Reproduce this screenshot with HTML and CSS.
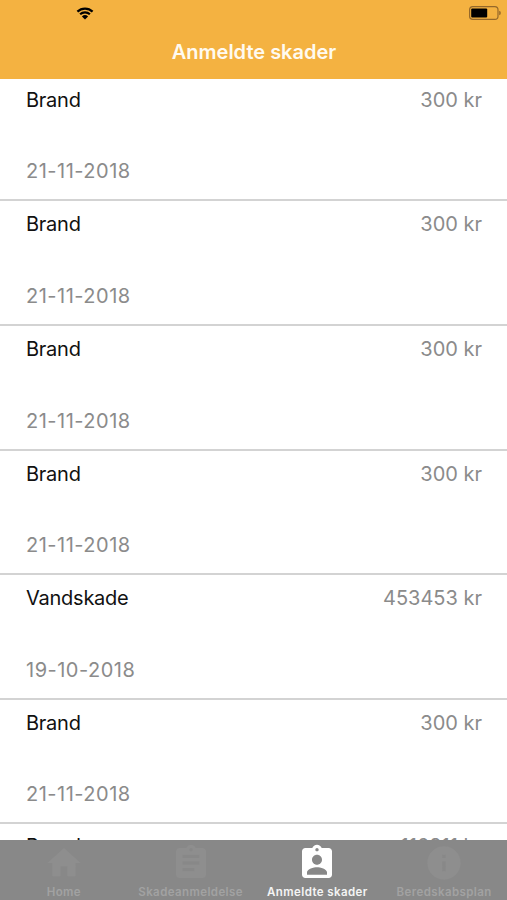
FILE: index.html
```html
<!DOCTYPE html>
<html lang="da">
<head>
    <meta charset="UTF-8">
    <meta name="viewport" content="width=device-width, initial-scale=1.0">
    <title>Anmeldte skader</title>
    <link rel="stylesheet" href="styles.css">
</head>
<body>
    <!-- Header with status bar -->
    <header class="header">
        <div class="status-bar">
            <svg class="wifi" viewBox="0 0 18 13">
                <path d="M1.4 4.6a11 11 0 0 1 15.2 0M4.1 7.3a7.1 7.1 0 0 1 9.8 0" fill="none" stroke="#000" stroke-width="2.2"/>
                <path d="M9 12.5L5.9 9.5a4.6 4.6 0 0 1 6.2 0z"/>
            </svg>
            <svg class="battery" viewBox="0 0 32 14">
                <rect x="0.6" y="0.6" width="28.4" height="12.8" rx="3.2" fill="none" stroke="#94682a" stroke-width="1.2"/>
                <rect x="2.2" y="2.4" width="16" height="9.2" rx="1"/>
                <path d="M30.2 4.8a2.3 2.3 0 0 1 0 4.4z" fill="#94682a"/>
            </svg>
        </div>
        <h1 class="title">Anmeldte skader</h1>
    </header>

    <!-- List of reported damages -->
    <main class="list">
        <div class="row">
            <div class="row-top"><span class="type">Brand</span><span class="amount">300 kr</span></div>
            <span class="date">21-11-2018</span>
        </div>
        <div class="row">
            <div class="row-top"><span class="type">Brand</span><span class="amount">300 kr</span></div>
            <span class="date">21-11-2018</span>
        </div>
        <div class="row">
            <div class="row-top"><span class="type">Brand</span><span class="amount">300 kr</span></div>
            <span class="date">21-11-2018</span>
        </div>
        <div class="row">
            <div class="row-top"><span class="type">Brand</span><span class="amount">300 kr</span></div>
            <span class="date">21-11-2018</span>
        </div>
        <div class="row">
            <div class="row-top"><span class="type">Vandskade</span><span class="amount">453453 kr</span></div>
            <span class="date">19-10-2018</span>
        </div>
        <div class="row">
            <div class="row-top"><span class="type">Brand</span><span class="amount">300 kr</span></div>
            <span class="date">21-11-2018</span>
        </div>
        <div class="row row-last">
            <div class="row-top"><span class="type">Brand</span><span class="amount">116311 kr</span></div>
        </div>
    </main>

    <!-- Tab bar -->
    <nav class="tabs">
        <a class="tab">
            <svg viewBox="0 0 24 24"><path d="M10 20v-6h4v6h5v-8h3L12 3 2 12h3v8z"/></svg>
            <span>Home</span>
        </a>
        <a class="tab">
            <svg viewBox="0 0 24 24"><path d="M19 3h-4.180C14.400 1.840 13.300 1 12 1s-2.400.84-2.820 2H5c-1.100 0-2 .9-2 2v14c0 1.100.9 2 2 2h14c1.100 0 2-.9 2-2V5c0-1.100-.9-2-2-2zm-7 0c.55 0 1 .45 1 1s-.45 1-1 1-1-.45-1-1 .45-1 1-1zm2 14H7v-2h7v2zm3-4H7v-2h10v2zm0-4H7V7h10v2z"/></svg>
            <span>Skadeanmeldelse</span>
        </a>
        <a class="tab active">
            <svg viewBox="0 0 24 24"><path d="M19 3h-4.180C14.400 1.840 13.300 1 12 1s-2.400.84-2.820 2H5c-1.100 0-2 .9-2 2v14c0 1.100.9 2 2 2h14c1.100 0 2-.9 2-2V5c0-1.100-.9-2-2-2zm-7 0c.55 0 1 .45 1 1s-.45 1-1 1-1-.45-1-1 .45-1 1-1zm0 4c1.660 0 3 1.340 3 3s-1.340 3-3 3-3-1.340-3-3 1.340-3 3-3zm6 12H6v-1.400c0-2 4-3.100 6-3.100s6 1.100 6 3.100V19z"/></svg>
            <span>Anmeldte skader</span>
        </a>
        <a class="tab">
            <svg viewBox="0 0 24 24"><path d="M12 2C6.480 2 2 6.480 2 12s4.480 10 10 10 10-4.480 10-10S17.520 2 12 2zm1 15h-2v-6h2v6zm0-8h-2V7h2v2z"/></svg>
            <span>Beredskabsplan</span>
        </a>
    </nav>
</body>
</html>
```
FILE: styles.css
```css
* {
    box-sizing: border-box;
}

body {
    margin: 0;
    height: 900px;
    display: flex;
    flex-direction: column;
    overflow: hidden;
    background: #fff;
    font-family: Inter, "Liberation Sans", sans-serif;
}

/* Header */
.header {
    flex: none;
    height: 79px;
    background: #f4b241;
}

.status-bar {
    display: flex;
    justify-content: space-between;
    align-items: center;
    height: 26px;
    padding: 0 6px 0 76px;
}

.wifi {
    width: 18px;
    height: 13px;
}

.battery {
    width: 32px;
    height: 14px;
}

.title {
    margin: 0;
    padding-left: 1px;
    font-size: 20px;
    font-weight: 600;
    line-height: 52px;
    text-align: center;
    color: #fffaf0;
}

/* List */
.list {
    flex: 1;
    min-height: 0;
    overflow: hidden;
}

.row {
    display: flex;
    flex-direction: column;
    justify-content: space-between;
    height: 124.6px;
    padding: 9px 25px 14px;
    border-bottom: 2px solid #d3d3d3;
}

/* The list is scrolled slightly under the header */
.row:first-child {
    margin-top: -2.2px;
}

.row-last {
    padding-top: 8px;
}

.row-top {
    display: flex;
    justify-content: space-between;
}

.type,
.amount,
.date {
    font-size: 20px;
    line-height: 28px;
}

.type {
    padding-left: 1px;
    letter-spacing: -0.25px;
    color: #111;
}

.amount {
    color: #8b8b8b;
}

.date {
    padding-left: 1px;
    letter-spacing: 0.5px;
    color: #8b8b8b;
}

/* Tab bar */
.tabs {
    flex: none;
    display: grid;
    grid-template-columns: repeat(4, 1fr);
    height: 60px;
    background: #888;
}

.tab {
    display: flex;
    flex-direction: column;
    align-items: center;
    padding: 3px 0 0 1px;
    font-size: 11.5px;
    font-weight: 600;
    line-height: 18px;
    letter-spacing: 0.4px;
    white-space: nowrap;
    color: #a2a2a2;
}

.tab svg {
    width: 40px;
    height: 40px;
    fill: #8e8e8e;
}

.tab.active {
    color: #f4f4f4;
}

.tab.active svg {
    fill: #fff;
}
```
